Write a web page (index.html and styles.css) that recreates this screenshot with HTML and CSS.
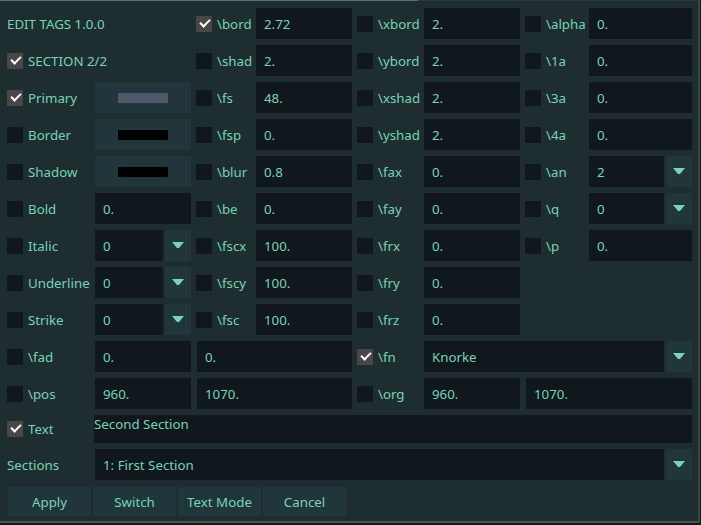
FILE: index.html
```html
<!DOCTYPE html>
<html>
<head>
<meta charset="utf-8">
<link rel="stylesheet" href="styles.css">
</head>
<body>
<div class="window">
  <div class="grid">
    <div class="title span2">EDIT TAGS 1.0.0</div>
    <label class="cb"><span class="box on"></span>\bord</label><div class="in">2.72</div>
    <label class="cb"><span class="box"></span>\xbord</label><div class="in">2.</div>
    <label class="cb"><span class="box"></span>\alpha</label><div class="in">0.</div>

    <label class="cb span2"><span class="box on"></span>SECTION 2/2</label>
    <label class="cb"><span class="box"></span>\shad</label><div class="in">2.</div>
    <label class="cb"><span class="box"></span>\ybord</label><div class="in">2.</div>
    <label class="cb"><span class="box"></span>\1a</label><div class="in">0.</div>

    <label class="cb"><span class="box on"></span>Primary</label><div class="swatch"><span class="chip primary"></span></div>
    <label class="cb"><span class="box"></span>\fs</label><div class="in">48.</div>
    <label class="cb"><span class="box"></span>\xshad</label><div class="in">2.</div>
    <label class="cb"><span class="box"></span>\3a</label><div class="in">0.</div>

    <label class="cb"><span class="box"></span>Border</label><div class="swatch"><span class="chip black"></span></div>
    <label class="cb"><span class="box"></span>\fsp</label><div class="in">0.</div>
    <label class="cb"><span class="box"></span>\yshad</label><div class="in">2.</div>
    <label class="cb"><span class="box"></span>\4a</label><div class="in">0.</div>

    <label class="cb"><span class="box"></span>Shadow</label><div class="swatch"><span class="chip black"></span></div>
    <label class="cb"><span class="box"></span>\blur</label><div class="in">0.8</div>
    <label class="cb"><span class="box"></span>\fax</label><div class="in">0.</div>
    <label class="cb"><span class="box"></span>\an</label><div class="dd"><div class="in">2</div><div class="arrow"><svg width="12" height="7" viewBox="0 0 12 7"><path d="M0 0H12L7 6H5Z" fill="#74d6b2"/></svg></div></div>

    <label class="cb"><span class="box"></span>Bold</label><div class="in">0.</div>
    <label class="cb"><span class="box"></span>\be</label><div class="in">0.</div>
    <label class="cb"><span class="box"></span>\fay</label><div class="in">0.</div>
    <label class="cb"><span class="box"></span>\q</label><div class="dd"><div class="in">0</div><div class="arrow"><svg width="12" height="7" viewBox="0 0 12 7"><path d="M0 0H12L7 6H5Z" fill="#74d6b2"/></svg></div></div>

    <label class="cb"><span class="box"></span>Italic</label><div class="dd"><div class="in">0</div><div class="arrow"><svg width="12" height="7" viewBox="0 0 12 7"><path d="M0 0H12L7 6H5Z" fill="#74d6b2"/></svg></div></div>
    <label class="cb"><span class="box"></span>\fscx</label><div class="in">100.</div>
    <label class="cb"><span class="box"></span>\frx</label><div class="in">0.</div>
    <label class="cb"><span class="box"></span>\p</label><div class="in">0.</div>

    <label class="cb"><span class="box"></span>Underline</label><div class="dd"><div class="in">0</div><div class="arrow"><svg width="12" height="7" viewBox="0 0 12 7"><path d="M0 0H12L7 6H5Z" fill="#74d6b2"/></svg></div></div>
    <label class="cb"><span class="box"></span>\fscy</label><div class="in">100.</div>
    <label class="cb"><span class="box"></span>\fry</label><div class="in">0.</div>
    <div class="span2"></div>

    <label class="cb"><span class="box"></span>Strike</label><div class="dd"><div class="in">0</div><div class="arrow"><svg width="12" height="7" viewBox="0 0 12 7"><path d="M0 0H12L7 6H5Z" fill="#74d6b2"/></svg></div></div>
    <label class="cb"><span class="box"></span>\fsc</label><div class="in">100.</div>
    <label class="cb"><span class="box"></span>\frz</label><div class="in">0.</div>
    <div class="span2"></div>

    <label class="cb"><span class="box"></span>\fad</label><div class="in">0.</div>
    <div class="in span2 shift">0.</div>
    <label class="cb"><span class="box on"></span>\fn</label>
    <div class="dd span3"><div class="in">Knorke</div><div class="arrow"><svg width="12" height="7" viewBox="0 0 12 7"><path d="M0 0H12L7 6H5Z" fill="#74d6b2"/></svg></div></div>

    <label class="cb"><span class="box"></span>\pos</label><div class="in">960.</div>
    <div class="in span2 shift">1070.</div>
    <label class="cb"><span class="box"></span>\org</label><div class="in">960.</div>
    <div class="in span2 shift">1070.</div>

    <label class="cb"><span class="box on"></span>Text</label>
    <div class="textbox span7">Second Section</div>

    <div class="plain">Sections</div>
    <div class="dd span7"><div class="in">1: First Section</div><div class="arrow"><svg width="12" height="7" viewBox="0 0 12 7"><path d="M0 0H12L7 6H5Z" fill="#74d6b2"/></svg></div></div>
  </div>
  <div class="buttons">
    <button class="btn">Apply</button>
    <button class="btn">Switch</button>
    <button class="btn">Text Mode</button>
    <button class="btn">Cancel</button>
  </div>
</div>
</body>
</html>
```
FILE: styles.css
```css
html, body {
  margin: 0;
  padding: 0;
  background: #151a1c;
}
body {
  width: 701px;
  height: 525px;
  overflow: hidden;
  font-family: "Noto Sans", "Open Sans", sans-serif;
  font-size: 13.3px;
  color: #74d6b2;
}
.window {
  box-sizing: border-box;
  width: 700px;
  height: 523px;
  background:
    linear-gradient(to right, #5b6b82 418px, #343a3c 418px) top left / 100% 1px no-repeat,
    #1e2d30;
  border-right: 2px solid #3b4446;
  border-bottom: 2px solid #4a4f50;
  padding: 8px 0 0 7px;
}
.grid {
  display: grid;
  grid-template-columns: 83px 96px 55px 96px 62px 96px 59px 103px;
  grid-template-rows: repeat(11, 31px) 28px 31px;
  column-gap: 5px;
  row-gap: 6px;
}
.span2 { grid-column: span 2; }
.span3 { grid-column: span 3; }
.span7 { grid-column: span 7; }
.title, .plain {
  display: flex;
  align-items: center;
  white-space: nowrap;
}
.cb {
  display: flex;
  align-items: center;
  gap: 5px;
  white-space: nowrap;
}
.box {
  flex: none;
  width: 16px;
  height: 16px;
  background: #10171d;
  position: relative;
}
.box.on {
  background: #474747;
}
.box.on::after {
  content: "";
  position: absolute;
  left: 4px;
  top: 3px;
  width: 8px;
  height: 4px;
  border-left: 2px solid #ffffff;
  border-bottom: 2px solid #ffffff;
  transform: rotate(-45deg);
}
.in {
  background: #10171d;
  display: flex;
  align-items: center;
  padding-left: 8px;
  white-space: nowrap;
  overflow: hidden;
}
.shift {
  margin-left: 1px;
}
.swatch {
  background: #21363a;
  display: flex;
  align-items: center;
  justify-content: center;
}
.chip {
  width: 50px;
  height: 10px;
}
.chip.primary { background: #4f5768; }
.chip.black { background: #000000; }
.dd {
  display: flex;
  gap: 2px;
}
.dd .in {
  flex: 1;
}
.arrow {
  width: 26px;
  flex: none;
  background: #21363a;
  display: flex;
  align-items: center;
  justify-content: center;
}
.textbox {
  background: #10171d;
  margin-left: -1px;
  line-height: 17px;
  padding-top: 1px;
}
.buttons {
  display: flex;
  gap: 2px;
  margin: 7px 0 0 1px;
}
.btn {
  width: 83px;
  height: 29px;
  border: none;
  background: #21363a;
  color: #74d6b2;
  font-family: "Noto Sans", "Open Sans", sans-serif;
  font-size: 13.3px;
  padding: 0;
}
```
